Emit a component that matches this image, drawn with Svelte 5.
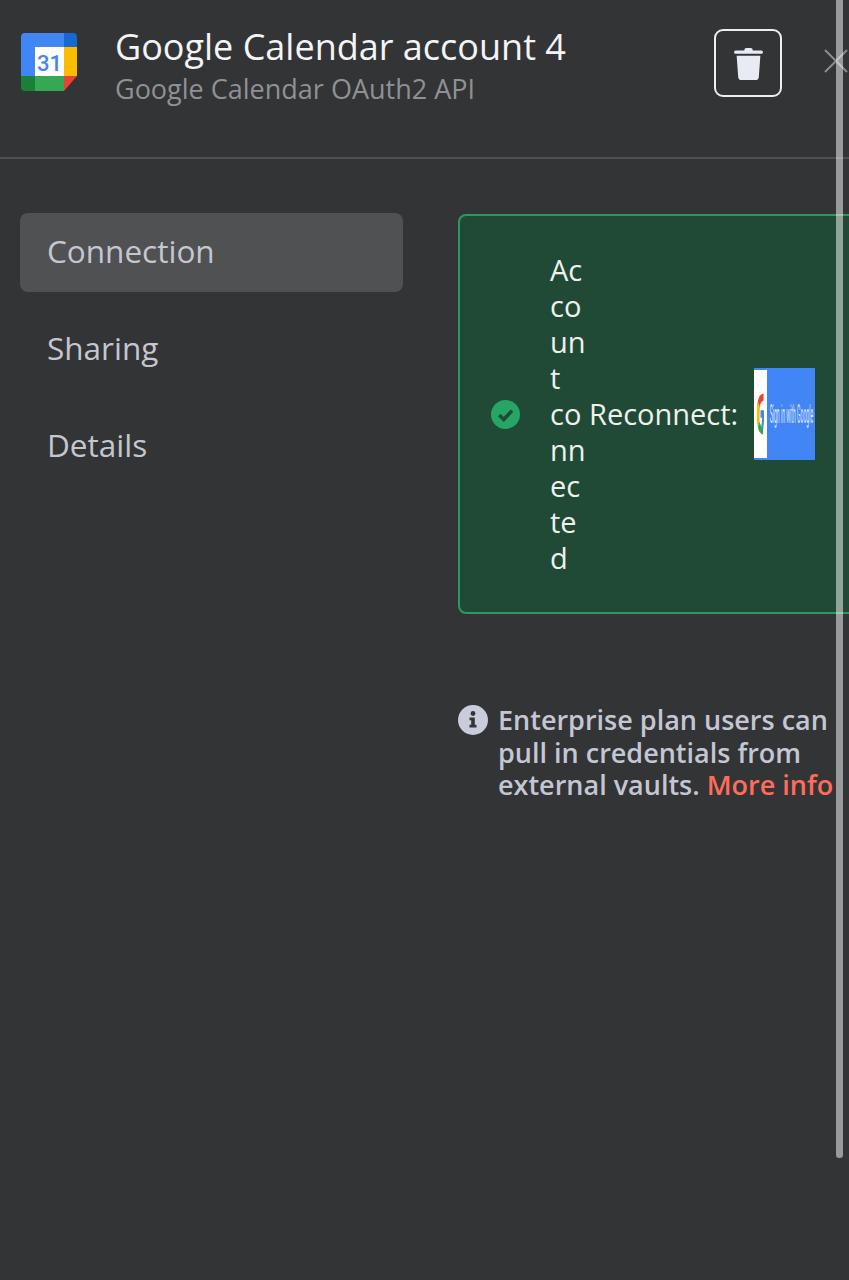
<script>
	const tabs = ['Connection', 'Sharing', 'Details'];
	let active = 'Connection';
</script>

<div class="modal">
	<header class="head">
		<svg class="logo" viewBox="0 0 56 58" aria-hidden="true">
			<path d="M4 0H43V14H14V43H0V4Q0 0 4 0Z" fill="#4285f4" />
			<path d="M43 0H52Q56 0 56 4V14H43Z" fill="#1967d2" />
			<rect x="43" y="14" width="13" height="29" fill="#fbbc04" />
			<rect x="14" y="43" width="29" height="15" fill="#34a853" />
			<path d="M0 43H14V58H4Q0 58 0 54Z" fill="#188038" />
			<path d="M43 43H56L43 58Z" fill="#ea4335" />
			<rect x="14" y="14" width="29" height="29" fill="#fff" />
			<text x="28.5" y="37.500" class="logo-num">31</text>
		</svg>
		<div class="titles">
			<h1>Google Calendar account 4</h1>
			<p>Google Calendar OAuth2 API</p>
		</div>
		<button class="trash" aria-label="Delete">
			<svg viewBox="0 0 28 32" width="29" height="33" aria-hidden="true">
				<path d="M10 2.500Q10 1 12 1H16Q18 1 18 2.500V3.500H26.500Q28 3.500 28 5Q28 6.500 26.500 6.500H1.500Q0 6.500 0 5Q0 3.500 1.500 3.500H10Z" fill="#e8eaf4" />
				<path d="M2.500 8.500H25.500L24 29Q23.800 32 21 32H7Q4.200 32 4 29Z" fill="#e8eaf4" />
			</svg>
		</button>
		<svg class="close" viewBox="0 0 24 24" width="24" height="24" aria-hidden="true">
			<path d="M1 1L23 23M23 1L1 23" stroke="#8b8c8e" stroke-width="2" fill="none" />
		</svg>
	</header>

	<div class="body">
		<nav class="side">
			{#each tabs as tab}
				<div class="tab" class:active={tab === active}>{tab}</div>
			{/each}
		</nav>

		<main class="content">
			<section class="banner">
				<svg class="ok" viewBox="0 0 28 28" width="29" height="29" aria-hidden="true">
					<circle cx="14" cy="14" r="14" fill="#27a566" />
					<path d="M8 14.500L12.300 18.800L20.300 10.300" stroke="#1f4a35" stroke-width="3.400" fill="none" />
				</svg>
				<span class="status">Account connected</span>
				<span class="reconnect">Reconnect:</span>
				<div class="google">
					<div class="g-side">
						<svg viewBox="0 0 8 44" width="7" height="42" preserveAspectRatio="none" aria-hidden="true">
							<path d="M7.500 0.500A7 11 0 0 0 1 9L0 22H2.500A5 12 0 0 1 7.500 8Z" fill="#ea4335" />
							<path d="M1 9A9 20 0 0 0 1 35L3 30V14Z" fill="#fbbc04" />
							<path d="M1 35A7 11 0 0 0 7 43.500V36A5 12 0 0 1 3 30Z" fill="#34a853" />
							<path d="M4 18H8V30L7 38L5 34L6 26H4Z" fill="#4285f4" />
						</svg>
					</div>
					<span class="g-label"><span>Sign in with Google</span></span>
				</div>
			</section>

			<div class="note">
				<svg class="info" viewBox="0 0 30 30" width="30" height="30" aria-hidden="true">
					<circle cx="15" cy="15" r="15" fill="#c9ccdb" />
					<circle cx="15" cy="8.500" r="2.400" fill="#333436" />
					<path d="M11.500 12.500H16.800V19.800H18.500V22.500H11.500V19.800H13.200V15.200H11.500Z" fill="#333436" />
				</svg>
				<p>Enterprise plan users can pull in credentials from external vaults. <span class="more">More info</span></p>
			</div>
		</main>
	</div>

	<div class="scrollbar"></div>
</div>

<style>
	:global(body) {
		background: #333436;
		overflow: hidden;
	}

	.modal {
		position: relative;
		width: 849px;
		height: 1280px;
		overflow: hidden;
		background: #333436;
		font-family: 'Open Sans', sans-serif;
	}

	.head {
		display: flex;
		align-items: flex-start;
		padding: 29px 0 0 21px;
		box-sizing: border-box;
		border-bottom: 2px solid #4f5052;
		height: 159px;
	}

	.logo {
		width: 56px;
		height: 58px;
		margin-top: 4px;
		flex: none;
	}

	.logo-num {
		font-family: 'Roboto', sans-serif;
		font-size: 22px;
		font-weight: 500;
		fill: #4285f4;
		text-anchor: middle;
	}

	.titles {
		margin-left: 38px;
		width: 599px;
		flex: none;
	}

	h1 {
		margin: 0;
		font-size: 36px;
		font-weight: 400;
		line-height: 36px;
		color: #f3f4f6;
	}

	.titles p {
		margin: 5px 0 0;
		font-size: 27px;
		line-height: 38px;
		color: #8f9194;
	}

	.trash {
		width: 68px;
		height: 68px;
		margin: 0;
		padding: 0;
		flex: none;
		display: flex;
		align-items: center;
		justify-content: center;
		background: none;
		border: 2px solid #eceef2;
		border-radius: 9px;
		box-sizing: border-box;
	}

	.close {
		margin: 20px 0 0 42px;
		flex: none;
	}

	.body {
		display: flex;
		align-items: flex-start;
		padding: 54px 0 0 20px;
	}

	.side {
		width: 383px;
		flex: none;
		display: flex;
		flex-direction: column;
		gap: 18px;
	}

	.tab {
		height: 79px;
		padding: 0 0 4px 27px;
		box-sizing: border-box;
		display: flex;
		align-items: center;
		border-radius: 8px;
		font-size: 31.500px;
		color: #c4c6d0;
	}

	.tab.active {
		background: #505153;
	}

	.content {
		margin-left: 55px;
		width: 420px;
		flex: none;
		padding-top: 1px;
	}

	.banner {
		display: flex;
		align-items: center;
		height: 400px;
		box-sizing: border-box;
		padding-left: 31px;
		background: #204a35;
		border: 2px solid #2a9a62;
		border-radius: 8px;
		color: #eef1ee;
		font-size: 29px;
		line-height: 36px;
	}

	.ok {
		flex: none;
	}

	.status {
		width: 36px;
		margin-left: 30px;
		flex: none;
		overflow-wrap: anywhere;
	}

	.reconnect {
		margin-left: 3px;
		flex: none;
	}

	.google {
		width: 61px;
		height: 92px;
		margin-left: 16px;
		flex: none;
		display: flex;
		background: #4285f4;
		box-sizing: border-box;
		padding: 2px 0;
	}

	.g-side {
		width: 13px;
		background: #fff;
		display: flex;
		align-items: center;
		justify-content: center;
		flex: none;
	}

	.g-label {
		flex: 1;
		display: flex;
		align-items: center;
		justify-content: center;
		overflow: hidden;
		color: #dfe8ff;
	}

	.g-label span {
		font-family: 'Roboto', sans-serif;
		font-size: 17px;
		line-height: 20px;
		white-space: nowrap;
		transform: scaleX(0.3) scaleY(1.5);
		flex: none;
	}

	.note {
		display: flex;
		align-items: flex-start;
		margin-top: 91px;
		gap: 10px;
	}

	.info {
		flex: none;
	}

	.note p {
		margin: -1px 0 0;
		width: 345px;
		font-size: 27px;
		font-weight: 600;
		line-height: 32.500px;
		color: #c4c7d3;
	}

	.more {
		color: #ff6d5a;
	}

	.scrollbar {
		position: absolute;
		top: 0;
		left: 836px;
		width: 7px;
		height: 1158px;
		background: rgba(255, 255, 255, 0.5);
		border-radius: 0 0 3px 3px;
	}
</style>
